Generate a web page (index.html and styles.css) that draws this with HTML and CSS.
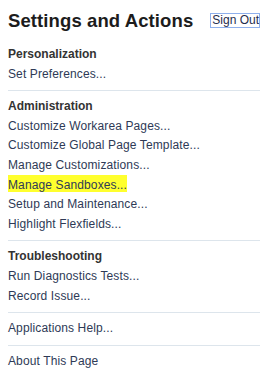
FILE: index.html
```html
<!DOCTYPE html>
<html lang="en">
<head>
    <meta charset="UTF-8">
    <meta name="viewport" content="width=device-width, initial-scale=1.0">
    <title>Settings and Actions</title>
    <link rel="stylesheet" href="styles.css">
</head>
<body>
    <div class="panel">
        <div class="panel-head">
            <h1 class="title">Settings and Actions</h1>
            <a class="sign-out" href="#">Sign Out</a>
        </div>

        <div class="group">
            <h2 class="group-title">Personalization</h2>
            <a class="item" href="#">Set Preferences...</a>
        </div>

        <div class="group">
            <h2 class="group-title">Administration</h2>
            <a class="item" href="#">Customize Workarea Pages...</a>
            <a class="item" href="#">Customize Global Page Template...</a>
            <a class="item" href="#">Manage Customizations...</a>
            <a class="item" href="#"><span class="mark">Manage Sandboxes...</span></a>
            <a class="item" href="#">Setup and Maintenance...</a>
            <a class="item" href="#">Highlight Flexfields...</a>
        </div>

        <div class="group">
            <h2 class="group-title">Troubleshooting</h2>
            <a class="item" href="#">Run Diagnostics Tests...</a>
            <a class="item" href="#">Record Issue...</a>
        </div>

        <div class="group">
            <a class="item" href="#">Applications Help...</a>
        </div>

        <div class="group last">
            <a class="item" href="#">About This Page</a>
        </div>
    </div>
</body>
</html>
```

FILE: styles.css
```css
body {
    margin: 0;
    background: #fff;
    font-family: "Liberation Sans", Arial, sans-serif;
}

.panel {
    width: 252px;
    margin-left: 8px;
}

.panel-head {
    display: flex;
    justify-content: space-between;
    align-items: flex-start;
    padding: 10px 0 7px;
}

.title {
    margin: 0;
    font-size: 18.5px;
    line-height: 22px;
    font-weight: bold;
    letter-spacing: 0.1px;
    color: #1c1c1c;
}

.sign-out {
    margin-top: 3px;
    border: 1px solid #8fb0ec;
    font-size: 12px;
    line-height: 13px;
    padding: 0 0 0 1px;
    color: #1f2d4d;
    text-decoration: none;
}

.group {
    padding: 6px 0;
    border-bottom: 1px solid #dde5ec;
}

.group.last {
    border-bottom: none;
}

.group-title {
    margin: 0;
    font-size: 12px;
    line-height: 19.6px;
    font-weight: bold;
    color: #333;
}

.item {
    display: block;
    font-size: 12px;
    line-height: 19.6px;
    letter-spacing: 0.12px;
    color: #2e3a56;
    text-decoration: none;
}

.mark {
    background: #ffff2e;
    padding-top: 3px;
}
```
